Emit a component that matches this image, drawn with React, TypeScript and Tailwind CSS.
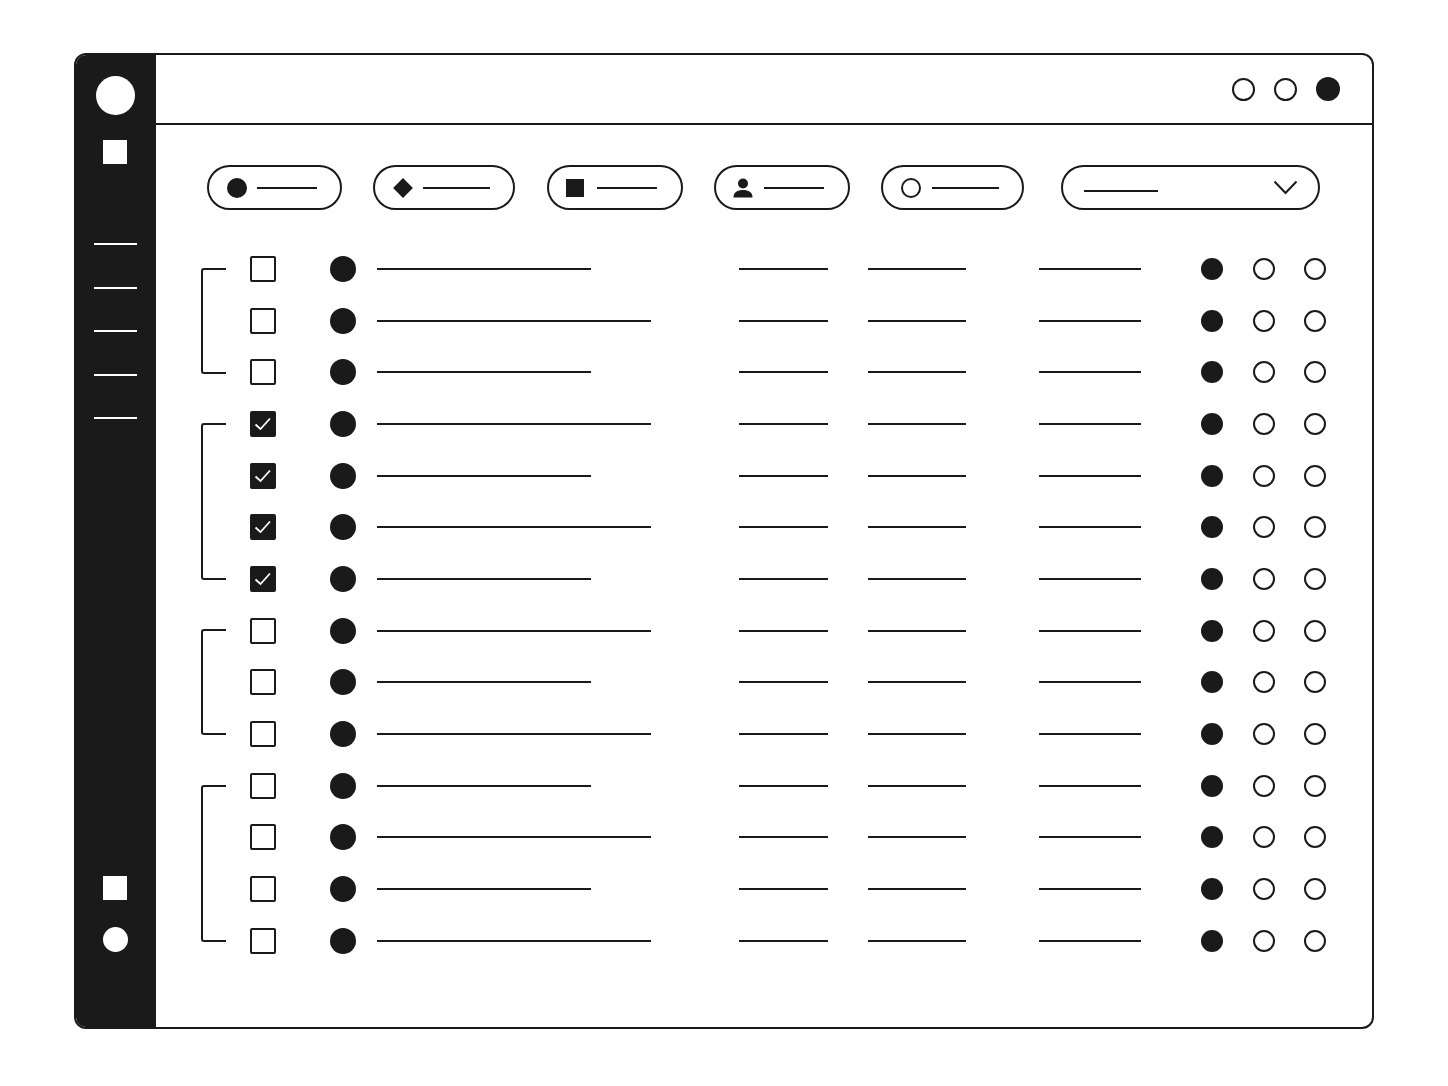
import React from "react";

function Line({ w }: { w: string }) {
  return <div className={`h-[2px] bg-[#1a1a1a] ${w}`} />;
}

function Pill({ cls, icon, line }: { cls: string; icon: React.ReactNode; line: string }) {
  return (
    <div className={`h-[45px] shrink-0 rounded-full border-2 border-[#1a1a1a] flex items-center pl-[17px] ${cls}`}>
      <div className="w-[22px] h-[22px] flex items-center justify-center shrink-0">{icon}</div>
      {line === "a" && <div className="ml-[9px] h-[2px] w-[60px] bg-[#1a1a1a]" />}
      {line === "b" && <div className="ml-[9px] h-[2px] w-[67px] bg-[#1a1a1a]" />}
      {line === "d" && <div className="ml-[10px] h-[2px] w-[67px] bg-[#1a1a1a]" />}
    </div>
  );
}

function Row({ checked, long }: { checked: boolean; long: boolean }) {
  return (
    <div className="flex items-center h-[51.69px]">
      {checked ? (
        <div className="w-[26px] h-[26px] rounded-[2px] bg-[#1a1a1a] flex items-center justify-center shrink-0">
          <svg width="18" height="14" viewBox="0 0 18 14" fill="none">
            <path d="M1.5 7.5 L6.5 12 L16 1.5" stroke="#ffffff" strokeWidth="1.8" />
          </svg>
        </div>
      ) : (
        <div className="w-[26px] h-[26px] rounded-[2px] border-2 border-[#1a1a1a] shrink-0" />
      )}
      <div className="ml-[54px] w-[26px] h-[26px] rounded-full bg-[#1a1a1a] shrink-0" />
      <div className="ml-[21px] w-[362px] shrink-0">
        <Line w={long ? "w-[274px]" : "w-[214px]"} />
      </div>
      <Line w="w-[89px] shrink-0" />
      <Line w="w-[98px] shrink-0 ml-[40px]" />
      <Line w="w-[102px] shrink-0 ml-[73px]" />
      <div className="ml-[60px] w-[22px] h-[22px] rounded-full bg-[#1a1a1a] shrink-0" />
      <div className="ml-[29.5px] w-[22px] h-[22px] rounded-full border-2 border-[#1a1a1a] shrink-0" />
      <div className="ml-[29.5px] w-[22px] h-[22px] rounded-full border-2 border-[#1a1a1a] shrink-0" />
    </div>
  );
}

function Group({ rows }: { rows: { checked: boolean; long: boolean }[] }) {
  const bracketH = { 3: "h-[106px]", 4: "h-[157px]" } as Record<number, string>;
  return (
    <div className="flex items-center">
      <div className={`w-[25px] ${bracketH[rows.length]} border-2 border-r-0 border-[#1a1a1a] rounded-l-[3px] shrink-0`} />
      <div className="ml-[24px]">
        {rows.map((r, i) => (
          <Row key={i} checked={r.checked} long={r.long} />
        ))}
      </div>
    </div>
  );
}

export default function App() {
  const groups = [
    [
      { checked: false, long: false },
      { checked: false, long: true },
      { checked: false, long: false },
    ],
    [
      { checked: true, long: true },
      { checked: true, long: false },
      { checked: true, long: true },
      { checked: true, long: false },
    ],
    [
      { checked: false, long: true },
      { checked: false, long: false },
      { checked: false, long: true },
    ],
    [
      { checked: false, long: false },
      { checked: false, long: true },
      { checked: false, long: false },
      { checked: false, long: true },
    ],
  ];
  return (
    <div className="w-[1448px] h-[1086px] bg-white pt-[53px] pl-[74px]">
      <div className="w-[1300px] h-[976px] border-2 border-[#1a1a1a] rounded-[12px] overflow-hidden flex bg-white">
        <div className="w-[80px] shrink-0 bg-[#1a1a1a] flex flex-col items-center pt-[21px] pb-[75px] pr-[2px]">
          <div className="w-[39px] h-[39px] rounded-full bg-white" />
          <div className="mt-[25px] w-[24px] h-[24px] bg-white" />
          <div className="mt-[79px] flex flex-col gap-[41.5px]">
            <div className="w-[43px] h-[2px] bg-white" />
            <div className="w-[43px] h-[2px] bg-white" />
            <div className="w-[43px] h-[2px] bg-white" />
            <div className="w-[43px] h-[2px] bg-white" />
            <div className="w-[43px] h-[2px] bg-white" />
          </div>
          <div className="mt-auto w-[24px] h-[24px] bg-white" />
          <div className="mt-[27px] w-[25px] h-[25px] rounded-full bg-white" />
        </div>
        <div className="flex-1 min-w-0">
          <div className="h-[70px] border-b-2 border-[#1a1a1a] flex items-center justify-end pr-[32px] gap-[19px]">
            <div className="w-[23px] h-[23px] rounded-full border-2 border-[#1a1a1a]" />
            <div className="w-[23px] h-[23px] rounded-full border-2 border-[#1a1a1a]" />
            <div className="w-[24px] h-[24px] rounded-full bg-[#1a1a1a]" />
          </div>
          <div className="pt-[40px] pl-[45px]">
            <div className="flex items-center ml-[6px]">
              <Pill
                cls="w-[135px]"
                line="a"
                icon={<div className="w-[20px] h-[20px] rounded-full bg-[#1a1a1a] mr-[1px]" />}
              />
              <Pill
                cls="w-[142px] ml-[31px]"
                line="b"
                icon={<div className="w-[14px] h-[14px] rotate-45 bg-[#1a1a1a]" />}
              />
              <Pill
                cls="w-[136px] ml-[32px]"
                line="a"
                icon={<div className="w-[18px] h-[18px] bg-[#1a1a1a] mr-[4px]" />}
              />
              <Pill
                cls="w-[136px] ml-[31px]"
                line="a"
                icon={
                  <svg width="20" height="20" viewBox="0 0 20 20" className="mr-[2px]">
                    <circle cx="10" cy="5.5" r="5" fill="#1a1a1a" />
                    <path d="M0.5 19.5 C0.5 14 4.5 12 10 12 C15.5 12 19.5 14 19.5 19.5 Z" fill="#1a1a1a" />
                  </svg>
                }
              />
              <Pill
                cls="w-[143px] ml-[31px]"
                line="d"
                icon={<div className="w-[20px] h-[20px] rounded-full border-2 border-[#1a1a1a]" />}
              />
              <div className="ml-[37px] w-[259px] h-[45px] shrink-0 rounded-full border-2 border-[#1a1a1a] flex items-center justify-between pl-[21px] pr-[20px]">
                <div className="w-[74px] h-[2px] bg-[#1a1a1a] mt-[6px]" />
                <svg width="26" height="16" viewBox="0 0 26 16" fill="none">
                  <path d="M2.5 1.5 L13.5 13 L24.5 1.5" stroke="#1a1a1a" strokeWidth="2" />
                </svg>
              </div>
            </div>
            <div className="mt-[33px]">
              {groups.map((g, i) => (
                <Group key={i} rows={g} />
              ))}
            </div>
          </div>
        </div>
      </div>
    </div>
  );
}
